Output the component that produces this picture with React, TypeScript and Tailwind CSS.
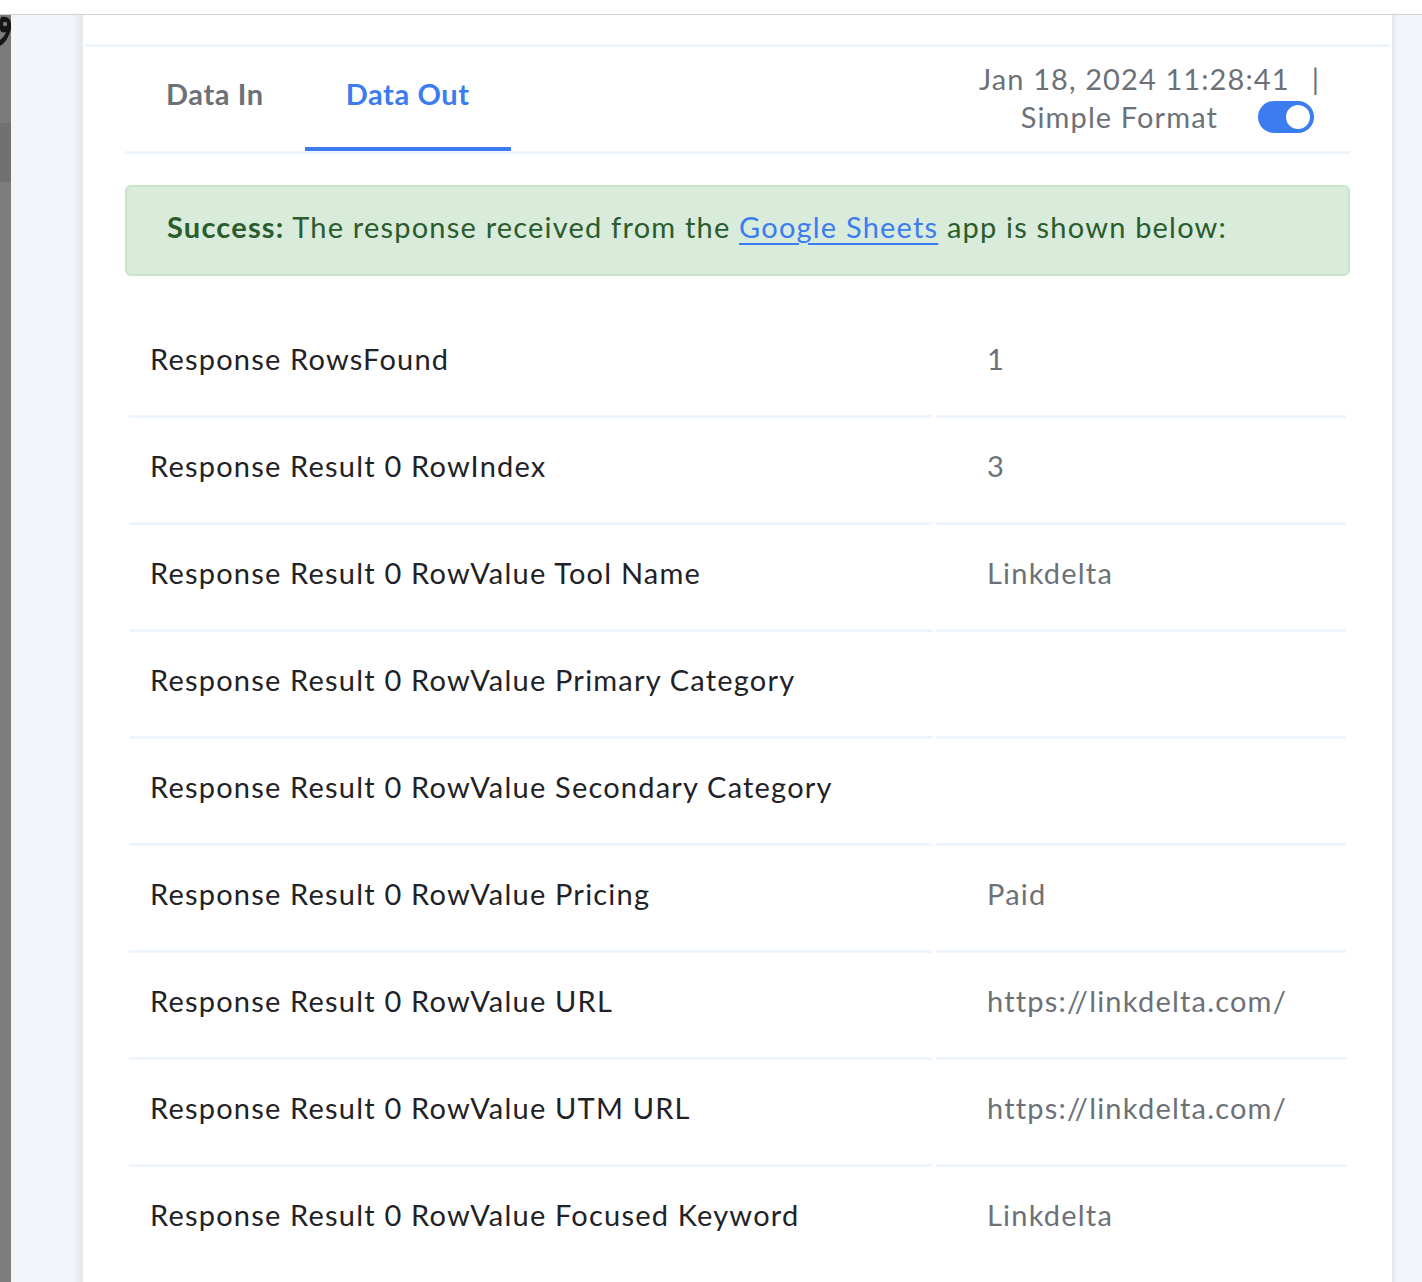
import React from "react";

const rows: { label: string; value: string }[] = [
  { label: "Response RowsFound", value: "1" },
  { label: "Response Result 0 RowIndex", value: "3" },
  { label: "Response Result 0 RowValue Tool Name", value: "Linkdelta" },
  { label: "Response Result 0 RowValue Primary Category", value: "" },
  { label: "Response Result 0 RowValue Secondary Category", value: "" },
  { label: "Response Result 0 RowValue Pricing", value: "Paid" },
  { label: "Response Result 0 RowValue URL", value: "https://linkdelta.com/" },
  { label: "Response Result 0 RowValue UTM URL", value: "https://linkdelta.com/" },
  { label: "Response Result 0 RowValue Focused Keyword", value: "Linkdelta" },
];

function Toggle() {
  return (
    <div className="w-[56px] h-[32px] rounded-full bg-[#3b7cf0] flex items-center justify-end pr-[4px]">
      <div className="w-[24px] h-[24px] rounded-full bg-white" />
    </div>
  );
}

export default function App() {
  return (
    <div
      className="w-[1422px] h-[1282px] overflow-hidden bg-white flex flex-col"
      style={{ fontFamily: "Lato, 'Noto Sans', sans-serif" }}
    >
      {/* top bar edge */}
      <div className="h-[15px] bg-white border-b border-[#d2d2d2] shrink-0" />

      <div className="flex flex-1 min-h-0">
        {/* far-left window strip */}
        <div className="w-[11px] bg-[#7b7b7b] flex flex-col shrink-0 overflow-hidden">
          <svg width="11" height="32" viewBox="0 0 11 32" className="shrink-0">
            <path d="M2 2 C7 1 11 4 11 9 L11 14 C9 22 5 28 0 31 L0 25 C3 23 5 20 6 17 C3 18 0 17 0 14 L0 6 C0 4 1 2 2 2 Z" fill="#161616" />
            <circle cx="5" cy="9" r="2.2" fill="#7b7b7b" />
          </svg>
          <div className="h-[76px]" />
          <div className="h-[59px] bg-[#717171]" />
          <div className="flex-1 bg-[#7d7d7d]" />
        </div>

        {/* left gutter */}
        <div className="w-[72px] bg-gradient-to-r from-[#f2f5f9] from-85% to-[#e3e6eb] shrink-0" />

        {/* main panel */}
        <div className="w-[1309px] bg-white flex flex-col shrink-0">
          <div className="h-[29px]" />
          <div className="mx-[2px] h-[3px] bg-[#eef5fd]" />

          <div className="px-[42px] flex flex-col">
            {/* tabs header */}
            <div className="flex justify-between border-b-[3px] border-[#eef5fd] h-[107px]">
              <div className="flex">
                <div className="px-[41px] pt-[29px] text-[29px] tracking-[0.6px] font-bold text-[#6c7178] leading-[36px]">
                  Data In
                </div>
                <div className="px-[41px] pt-[29px] text-[29px] tracking-[0.6px] font-bold text-[#3b7cf0] leading-[36px] border-b-4 border-[#3b7cf0]">
                  Data Out
                </div>
              </div>
              <div className="flex flex-col items-end pt-[12px] pr-[30px] text-[29px] tracking-[1.1px] text-[#6c7178] leading-[39px]">
                <div className="flex items-center">
                  <span>Jan 18, 2024 11:28:41</span>
                  <span className="ml-[22px]">|</span>
                </div>
                <div className="flex items-center mr-[6px] -mt-[1px]">
                  <span>Simple Format</span>
                  <div className="ml-[40px]">
                    <Toggle />
                  </div>
                </div>
              </div>
            </div>

            {/* success notice */}
            <div className="mt-[31px] h-[91px] rounded-[6px] border-2 border-[#c8e4cb] bg-[#d9ebdb] flex items-center pl-[40px] pb-[8px] text-[29px] tracking-[1.2px] text-[#2a5c2c]">
              <span>
                <span className="font-bold">Success:</span> The response received from the{" "}
                <a className="text-[#3b7cf0] underline underline-offset-[5px]" href="#">
                  Google Sheets
                </a>{" "}
                app is shown below:
              </span>
            </div>

            {/* response fields */}
            <div className="mt-[35px] px-[4px] grid grid-cols-[803px_410px] gap-x-[4px]">
              {rows.map((r, i) => {
                const last = i === rows.length - 1;
                return (
                  <React.Fragment key={r.label}>
                    <div
                      className={
                        last
                          ? "h-[107px] pl-[21px] pt-[30px] text-[29px] tracking-[1.2px] leading-[36px] text-[#1f2226]"
                          : "h-[107px] border-b-[3px] border-[#eef5fd] pl-[21px] pt-[30px] text-[29px] tracking-[1.2px] leading-[36px] text-[#1f2226]"
                      }
                    >
                      {r.label}
                    </div>
                    <div
                      className={
                        last
                          ? "h-[107px] pl-[51px] pt-[30px] text-[29px] tracking-[1.2px] leading-[36px] text-[#6c7178]"
                          : "h-[107px] border-b-[3px] border-[#eef5fd] pl-[51px] pt-[30px] text-[29px] tracking-[1.2px] leading-[36px] text-[#6c7178]"
                      }
                    >
                      {r.value}
                    </div>
                  </React.Fragment>
                );
              })}
            </div>
          </div>
        </div>

        {/* right gutter */}
        <div className="flex-1 bg-gradient-to-r from-[#e4e7ec] via-[#f2f5f9] via-20% to-[#f2f5f9]" />
      </div>
    </div>
  );
}
